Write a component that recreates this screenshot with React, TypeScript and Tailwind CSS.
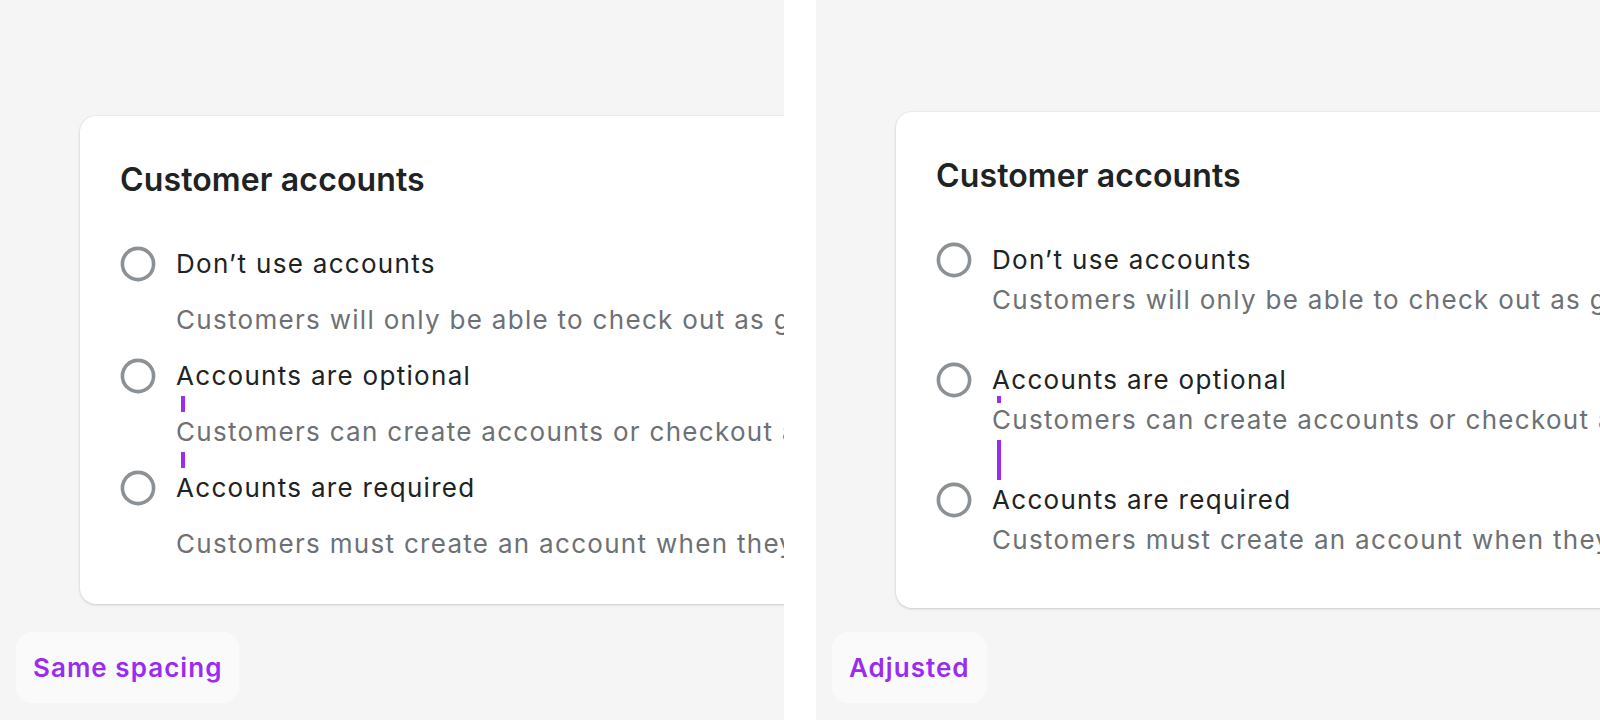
import React from "react";

type Item = { title: string; desc: string };

const items: Item[] = [
  { title: "Don\u2019t use accounts", desc: "Customers will only be able to check out as guests." },
  { title: "Accounts are optional", desc: "Customers can create accounts or checkout as guests." },
  { title: "Accounts are required", desc: "Customers must create an account when they check out." },
];

function Radio() {
  return (
    <div className="flex h-10 w-9 shrink-0 items-center">
      <svg width="36" height="36" viewBox="0 0 36 36">
        <circle cx="18" cy="18" r="15.6" fill="none" stroke="#8c9196" strokeWidth="3.6" />
      </svg>
    </div>
  );
}

function Bar({ className }: { className: string }) {
  return <div className={"w-1 bg-[#9a2cf0] " + className} />;
}

const titleCls = "whitespace-nowrap text-[26px] leading-10 tracking-[0.05em] text-[#202223]";
const descCls = "whitespace-nowrap text-[26px] leading-10 tracking-[0.05em] text-[#6d7175]";

function SamePanelItems() {
  return (
    <div className="flex flex-col">
      {items.map((it, i) => (
        <React.Fragment key={i}>
          {i > 0 && (
            <div className="flex h-4 pl-[61px]">{i === 2 && <Bar className="h-4" />}</div>
          )}
          <div className="flex gap-5">
            <Radio />
            <div className="flex flex-col">
              <div className={titleCls}>{it.title}</div>
              <div className="flex h-4 pl-[5px]">{i === 1 && <Bar className="h-4" />}</div>
              <div className={descCls}>{it.desc}</div>
            </div>
          </div>
        </React.Fragment>
      ))}
    </div>
  );
}

function AdjustedPanelItems() {
  return (
    <div className="flex flex-col">
      {items.map((it, i) => (
        <React.Fragment key={i}>
          {i > 0 && (
            <div className="flex h-10 pl-[61px]">{i === 2 && <Bar className="h-10" />}</div>
          )}
          <div className="flex gap-5">
            <Radio />
            <div className="flex flex-col">
              <div className={titleCls}>{it.title}</div>
              {i === 1 && (
                <div className="relative h-0">
                  <div className="absolute left-[5px] top-[-4px] h-[7px] w-1 bg-[#9a2cf0]" />
                </div>
              )}
              <div className={descCls}>{it.desc}</div>
            </div>
          </div>
        </React.Fragment>
      ))}
    </div>
  );
}

function Panel({ label, adjusted }: { label: string; adjusted: boolean }) {
  return (
    <div className="relative flex h-[720px] w-[784px] shrink-0 items-center overflow-hidden bg-[#f5f5f5] pl-20">
      <div
        className={
          "w-[960px] shrink-0 rounded-[16px] bg-white px-10 pt-10 shadow-[0_1px_3px_rgba(0,0,0,0.16),0_0_0_1px_rgba(0,0,0,0.02)] " +
          (adjusted ? "pb-12" : "pb-10")
        }
      >
        <div className="mb-10 text-[32px] font-semibold leading-[48px] tracking-[0.004em] text-[#202223]">
          Customer accounts
        </div>
        {adjusted ? <AdjustedPanelItems /> : <SamePanelItems />}
      </div>
      <div className="absolute bottom-[17px] left-4 rounded-2xl bg-[#fafafa] px-[17px] py-4 text-[26px] font-semibold leading-[39px] tracking-[0.04em] text-[#9a2cf0]">
        {label}
      </div>
    </div>
  );
}

export default function App() {
  return (
    <div
      className="flex h-[720px] w-[1600px] gap-8 overflow-hidden bg-white"
      style={{ fontFamily: "Inter, 'Noto Sans', sans-serif" }}
    >
      <Panel label="Same spacing" adjusted={false} />
      <Panel label="Adjusted" adjusted={true} />
    </div>
  );
}
